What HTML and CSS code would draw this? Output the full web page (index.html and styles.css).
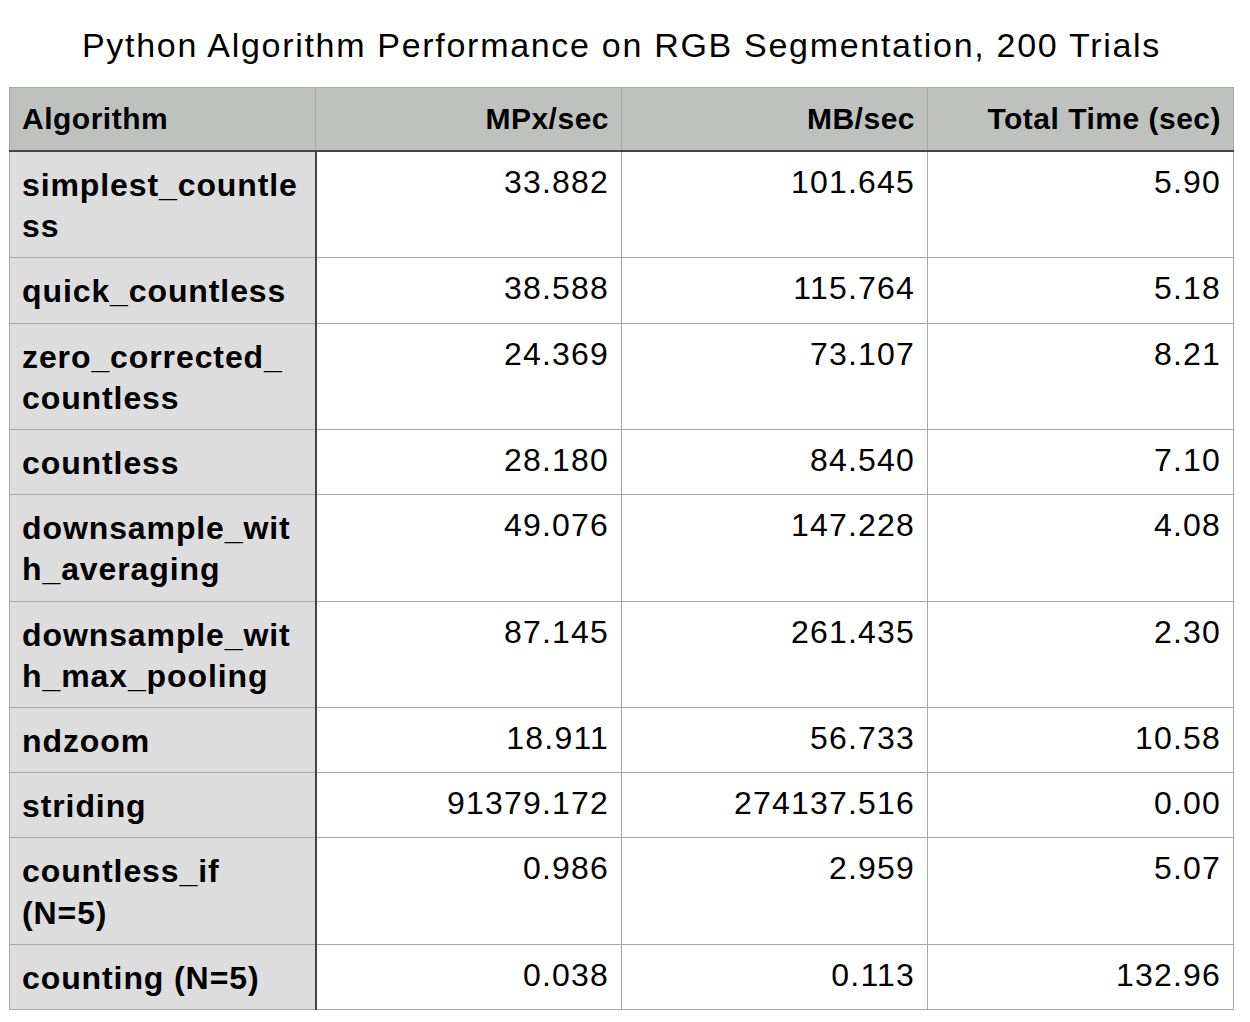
FILE: index.html
```html
<!DOCTYPE html>
<html>
<head>
<meta charset="utf-8">
<link rel="stylesheet" href="styles.css">
</head>
<body>
<div class="page">
  <h1 class="title">Python Algorithm Performance on RGB Segmentation, 200 Trials</h1>
  <table class="perf">
    <thead>
      <tr>
        <th class="name">Algorithm</th>
        <th class="num">MPx/sec</th>
        <th class="num">MB/sec</th>
        <th class="num">Total Time (sec)</th>
      </tr>
    </thead>
    <tbody>
      <tr><td class="name">simplest_countle<br>ss</td><td class="num">33.882</td><td class="num">101.645</td><td class="num">5.90</td></tr>
      <tr><td class="name">quick_countless</td><td class="num">38.588</td><td class="num">115.764</td><td class="num">5.18</td></tr>
      <tr><td class="name">zero_corrected_<br>countless</td><td class="num">24.369</td><td class="num">73.107</td><td class="num">8.21</td></tr>
      <tr><td class="name">countless</td><td class="num">28.180</td><td class="num">84.540</td><td class="num">7.10</td></tr>
      <tr><td class="name">downsample_wit<br>h_averaging</td><td class="num">49.076</td><td class="num">147.228</td><td class="num">4.08</td></tr>
      <tr><td class="name">downsample_wit<br>h_max_pooling</td><td class="num">87.145</td><td class="num">261.435</td><td class="num">2.30</td></tr>
      <tr><td class="name">ndzoom</td><td class="num">18.911</td><td class="num">56.733</td><td class="num">10.58</td></tr>
      <tr><td class="name">striding</td><td class="num">91379.172</td><td class="num">274137.516</td><td class="num">0.00</td></tr>
      <tr><td class="name">countless_if<br>(N=5)</td><td class="num">0.986</td><td class="num">2.959</td><td class="num">5.07</td></tr>
      <tr><td class="name">counting (N=5)</td><td class="num">0.038</td><td class="num">0.113</td><td class="num">132.96</td></tr>
    </tbody>
  </table>
</div>
</body>
</html>
```
FILE: styles.css
```css
html, body {
  margin: 0;
  padding: 0;
  background: #ffffff;
}
body {
  font-family: "Liberation Sans", Arial, Helvetica, sans-serif;
  color: #000;
}
.page {
  width: 1250px;
  padding: 0 0 0 9px;
  box-sizing: border-box;
}
.title {
  margin: 0;
  width: 1225px;
  text-align: center;
  font-weight: normal;
  font-size: 34px;
  line-height: 40px;
  padding-top: 25px;
  height: 87px;
  box-sizing: border-box;
  letter-spacing: 1.7px;
  white-space: nowrap;
}
.perf {
  border-collapse: collapse;
  table-layout: fixed;
  width: 1225px;
  font-size: 32px;
  line-height: 41.2px;
}
.perf th, .perf td {
  border: 1px solid #a8a8a8;
  white-space: nowrap;
  vertical-align: top;
}
.perf th {
  background: #bfc1bf;
  font-weight: bold;
  font-size: 30px;
  line-height: 41px;
  letter-spacing: 0.5px;
  padding: 10px 12px 11px 12px;
  border-bottom: 2px solid #444444;
}
.perf td {
  padding: 10px 12px 10px 12px;
}
.perf td.name {
  background: #dddddd;
  font-weight: bold;
  letter-spacing: 0.9px;
  padding-top: 13px;
  border-right: 2px solid #444444;
}
.perf td.num {
  font-weight: normal;
  letter-spacing: 1.2px;
}
.perf .name { text-align: left; }
.perf .num { text-align: right; }
```
